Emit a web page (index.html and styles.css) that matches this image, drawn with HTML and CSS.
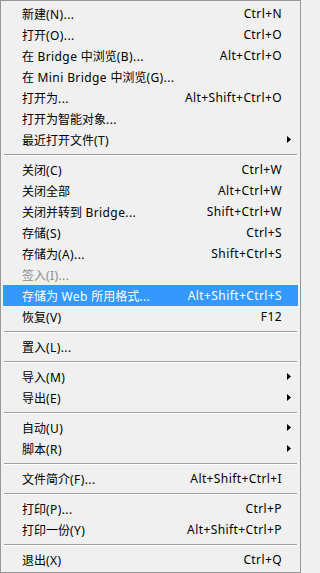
FILE: index.html
```html
<!DOCTYPE html>
<html lang="zh-CN">
<head>
<meta charset="utf-8">
<title>文件菜单</title>
<link rel="stylesheet" href="styles.css">
</head>
<body>
<div class="menu">
  <div class="item"><span class="label">新建<span class="en">(N)...</span></span><span class="key">Ctrl+N</span></div>
  <div class="item"><span class="label">打开<span class="en">(O)...</span></span><span class="key">Ctrl+O</span></div>
  <div class="item"><span class="label">在<span class="en"> Bridge </span>中浏览<span class="en">(B)...</span></span><span class="key">Alt+Ctrl+O</span></div>
  <div class="item"><span class="label">在<span class="en"> Mini Bridge </span>中浏览<span class="en">(G)...</span></span></div>
  <div class="item"><span class="label">打开为<span class="en">...</span></span><span class="key">Alt+Shift+Ctrl+O</span></div>
  <div class="item"><span class="label">打开为智能对象<span class="en">...</span></span></div>
  <div class="item"><span class="label">最近打开文件<span class="en">(T)</span></span><svg class="arrow" width="4" height="7" viewBox="0 0 4 7"><polygon points="0,0 4,3.5 0,7" fill="#000"/></svg></div>
  <div class="sep"></div>
  <div class="item"><span class="label">关闭<span class="en">(C)</span></span><span class="key">Ctrl+W</span></div>
  <div class="item"><span class="label">关闭全部</span><span class="key">Alt+Ctrl+W</span></div>
  <div class="item"><span class="label">关闭并转到<span class="en"> Bridge...</span></span><span class="key">Shift+Ctrl+W</span></div>
  <div class="item"><span class="label">存储<span class="en">(S)</span></span><span class="key">Ctrl+S</span></div>
  <div class="item"><span class="label">存储为<span class="en">(A)...</span></span><span class="key">Shift+Ctrl+S</span></div>
  <div class="item disabled"><span class="label">签入<span class="en">(I)...</span></span></div>
  <div class="item active"><span class="label">存储为<span class="en"> Web </span>所用格式<span class="en">...</span></span><span class="key">Alt+Shift+Ctrl+S</span></div>
  <div class="item"><span class="label">恢复<span class="en">(V)</span></span><span class="key">F12</span></div>
  <div class="sep"></div>
  <div class="item"><span class="label">置入<span class="en">(L)...</span></span></div>
  <div class="sep"></div>
  <div class="item"><span class="label">导入<span class="en">(M)</span></span><svg class="arrow" width="4" height="7" viewBox="0 0 4 7"><polygon points="0,0 4,3.5 0,7" fill="#000"/></svg></div>
  <div class="item"><span class="label">导出<span class="en">(E)</span></span><svg class="arrow" width="4" height="7" viewBox="0 0 4 7"><polygon points="0,0 4,3.5 0,7" fill="#000"/></svg></div>
  <div class="sep"></div>
  <div class="item"><span class="label">自动<span class="en">(U)</span></span><svg class="arrow" width="4" height="7" viewBox="0 0 4 7"><polygon points="0,0 4,3.5 0,7" fill="#000"/></svg></div>
  <div class="item"><span class="label">脚本<span class="en">(R)</span></span><svg class="arrow" width="4" height="7" viewBox="0 0 4 7"><polygon points="0,0 4,3.5 0,7" fill="#000"/></svg></div>
  <div class="sep"></div>
  <div class="item"><span class="label">文件简介<span class="en">(F)...</span></span><span class="key">Alt+Shift+Ctrl+I</span></div>
  <div class="sep"></div>
  <div class="item"><span class="label">打印<span class="en">(P)...</span></span><span class="key">Ctrl+P</span></div>
  <div class="item"><span class="label">打印一份<span class="en">(Y)</span></span><span class="key">Alt+Shift+Ctrl+P</span></div>
  <div class="sep"></div>
  <div class="item"><span class="label">退出<span class="en">(X)</span></span><span class="key">Ctrl+Q</span></div>
</div>
</body>
</html>
```

FILE: styles.css
```css
html, body {
  margin: 0;
  padding: 0;
}

body {
  background: #f0f0f0;
}

.menu {
  box-sizing: border-box;
  width: 301px;
  height: 573px;
  border: 1px solid #979797;
  background: #f0f0f0;
  padding: 2px;
  display: flex;
  flex-direction: column;
  font-family: "Noto Sans", "Noto Sans CJK SC", sans-serif;
  font-size: 12px;
  color: #000;
}

.item {
  height: 21px;
  flex: 0 0 21px;
  display: flex;
  align-items: center;
  padding-left: 19px;
  padding-right: 7px;
  white-space: nowrap;
}

.label {
  flex: 1;
}

.en {
  letter-spacing: 0.4px;
}

.key {
  margin-right: 9px;
  letter-spacing: 0.4px;
}

.arrow {
  display: block;
  flex: 0 0 auto;
}

.item.disabled {
  color: #8d8d8d;
}

.item.active {
  background: #3399ff;
  color: #fff;
}

.sep {
  box-sizing: border-box;
  flex: 0 0 2px;
  height: 2px;
  margin: 4px 1px 3px;
  border-top: 1px solid #a0a0a0;
  border-bottom: 1px solid #fff;
}
```
